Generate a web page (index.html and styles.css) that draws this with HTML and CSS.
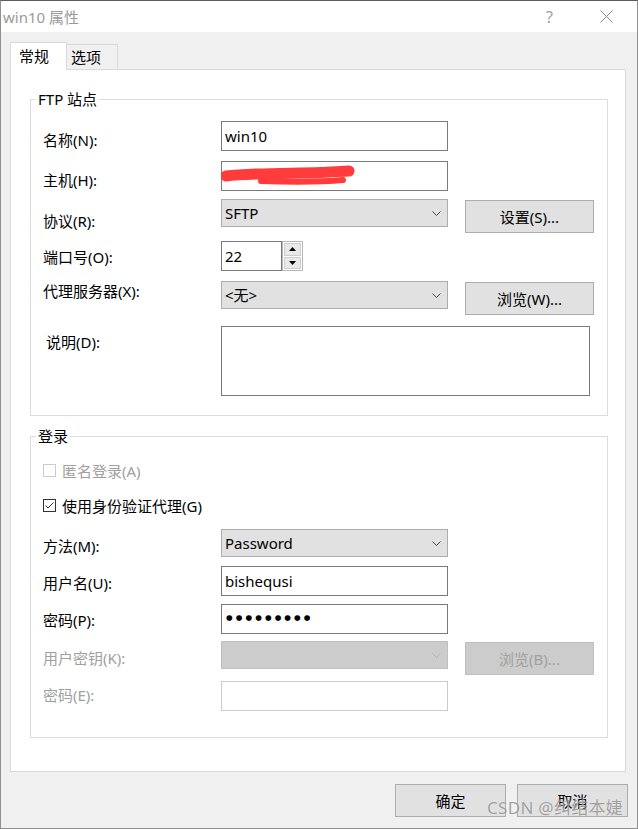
FILE: index.html
```html
<!DOCTYPE html>
<html lang="zh-CN">
<head>
<meta charset="utf-8">
<title>win10 属性</title>
<link rel="stylesheet" href="styles.css">
</head>
<body>
<div class="window">
  <div class="titlebar">
    <span class="title">win10 属性</span>
    <span class="tb-help">?</span>
    <span class="tb-close"><svg width="13" height="13" viewBox="0 0 13 13"><path d="M0.5 0.5L12.5 12.5M12.5 0.5L0.5 12.5" stroke="#8a8a8a" stroke-width="1" fill="none"/></svg></span>
  </div>
  <div class="content">
    <div class="tabs">
      <div class="tab active">常规</div>
      <div class="tab">选项</div>
    </div>
    <div class="panel">
      <div class="group g1">
        <span class="legend">FTP 站点</span>
        <div class="row h32"><span class="lbl p9">名称(N):</span><div class="field">win10</div></div>
        <div class="row h30"><span class="lbl p9">主机(H):</span>
          <div class="field host">
            <svg class="scribble" width="227" height="30" viewBox="0 0 227 30"><path d="M5 15 C 30 12, 70 12.5, 100 11.5 C 112 11, 122 10, 128 10" stroke="#ff3b3b" stroke-width="11" stroke-linecap="round" fill="none"/><path d="M40 20 C 70 21, 100 21, 122 19" stroke="#ff3b3b" stroke-width="6" stroke-linecap="round" fill="none"/></svg>
          </div>
        </div>
        <div class="row h34"><span class="lbl p12">协议(R):</span>
          <div class="select">SFTP<svg class="chev" width="9" height="5" viewBox="0 0 9 5"><path d="M0.5 0.5L4.5 4.5L8.5 0.5" stroke="#444" fill="none"/></svg></div>
          <div class="btn side">设置(S)...</div>
        </div>
        <div class="row h32"><span class="lbl p6">端口号(O):</span>
          <div class="field port">22</div>
          <div class="spinner">
            <div class="spin-btn"><svg width="7" height="4" viewBox="0 0 7 4"><path d="M0 4L3.5 0L7 4Z" fill="#000"/></svg></div>
            <div class="spin-btn"><svg width="7" height="4" viewBox="0 0 7 4"><path d="M0 0L3.5 4L7 0Z" fill="#000"/></svg></div>
          </div>
        </div>
        <div class="row h37"><span class="lbl p0">代理服务器(X):</span>
          <div class="select">&lt;无&gt;<svg class="chev" width="9" height="5" viewBox="0 0 9 5"><path d="M0.5 0.5L4.5 4.5L8.5 0.5" stroke="#444" fill="none"/></svg></div>
          <div class="btn side">浏览(W)...</div>
        </div>
        <div class="row h70"><span class="lbl p6 indent">说明(D):</span>
          <div class="field memo"></div>
        </div>
      </div>

      <div class="group g2">
        <span class="legend">登录</span>
        <div class="row h27 check-row disabled">
          <svg class="cbox" width="13" height="13" viewBox="0 0 13 13"><rect x="0.5" y="0.5" width="12" height="12" fill="#fff" stroke="#cccccc"/></svg>
          <span class="cb-label">匿名登录(A)</span>
        </div>
        <div class="row h26 check-row">
          <svg class="cbox" width="13" height="13" viewBox="0 0 13 13"><rect x="0.5" y="0.5" width="12" height="12" fill="#fff" stroke="#333"/><path d="M2.5 6.5L5 9L10.5 3.5" stroke="#333" fill="none"/></svg>
          <span class="cb-label">使用身份验证代理(G)</span>
        </div>
        <div class="row h29"><span class="lbl p7">方法(M):</span>
          <div class="select">Password<svg class="chev" width="9" height="5" viewBox="0 0 9 5"><path d="M0.5 0.5L4.5 4.5L8.5 0.5" stroke="#444" fill="none"/></svg></div>
        </div>
        <div class="row h30"><span class="lbl p7">用户名(U):</span><div class="field">bishequsi</div></div>
        <div class="row h29"><span class="lbl p6">密码(P):</span><div class="field"><span class="dots">●●●●●●●●●</span></div></div>
        <div class="row h32"><span class="lbl p7 dim">用户密钥(K):</span>
          <div class="select off"><span></span><svg class="chev" width="9" height="5" viewBox="0 0 9 5"><path d="M0.5 0.5L4.5 4.5L8.5 0.5" stroke="#b5b5b5" fill="none"/></svg></div>
          <div class="btn side off">浏览(B)...</div>
        </div>
        <div class="row h30"><span class="lbl p4 dim">密码(E):</span><div class="field off"></div></div>
      </div>
    </div>
    <div class="footer">
      <div class="btn dlg">确定</div>
      <div class="btn dlg">取消</div>
    </div>
  </div>
  <span class="watermark">CSDN @纠结本婕</span>
</div>
</body>
</html>
```

FILE: styles.css
```css
* { box-sizing: border-box; }
html, body { margin: 0; padding: 0; }
body {
  width: 638px;
  height: 829px;
  overflow: hidden;
  background: #f0f0f0;
  font-family: "Noto Sans", "Noto Sans CJK SC", sans-serif;
  font-size: 15px;
  color: #000;
}
.window {
  position: relative;
  width: 638px;
  height: 829px;
  border: 1px solid #909090;
  border-top-color: #5c5c5c;
  background: #f0f0f0;
  display: flex;
  flex-direction: column;
}
.titlebar {
  height: 31px;
  flex: none;
  background: #fff;
  display: flex;
  align-items: center;
  padding-left: 2px;
  color: #9a9a9a;
  line-height: 20px;
}
.title { flex: 1; }
.tb-help {
  width: 53px;
  text-align: center;
  font-size: 16px;
  color: #a0a0a0;
}
.tb-close {
  width: 61px;
  height: 31px;
  display: flex;
  align-items: center;
  justify-content: center;
}
.content {
  flex: 1;
  padding: 10px 9px 0 9px;
  display: flex;
  flex-direction: column;
}
.tabs {
  height: 27px;
  flex: none;
  display: flex;
  align-items: flex-end;
}
.tab {
  height: 25px;
  width: 51px;
  border: 1px solid #d9d9d9;
  border-bottom: none;
  border-left: none;
  padding: 2px 0 0 4px;
  line-height: 20px;
  background: #f0f0f0;
}
.tab.active {
  position: relative;
  z-index: 1;
  width: 57px;
  height: 28px;
  margin-bottom: -1px;
  border-left: 1px solid #d9d9d9;
  padding: 3px 0 0 8px;
  background: #fff;
}
.panel {
  height: 703px;
  flex: none;
  margin-right: 2px;
  background: #fff;
  border: 1px solid #d9d9d9;
  padding: 29px 17px 0 19px;
  display: flex;
  flex-direction: column;
  gap: 20px;
}
.group {
  position: relative;
  border: 1px solid #dcdcdc;
  display: flex;
  flex-direction: column;
  gap: 8px;
  padding: 21px 0 19px 12px;
}
.group.g2 { padding: 23px 0 26px 12px; }
.legend {
  position: absolute;
  top: -11px;
  left: 5px;
  padding: 0 2px;
  background: #fff;
  line-height: 20px;
}
.row {
  display: flex;
  align-items: flex-start;
  flex: none;
}
.h26 { height: 26px; }
.h27 { height: 27px; }
.h29 { height: 29px; }
.h30 { height: 30px; }
.h32 { height: 32px; }
.h34 { height: 34px; }
.h37 { height: 37px; }
.h70 { height: 70px; }
.lbl {
  width: 178px;
  flex: none;
  line-height: 20px;
  white-space: nowrap;
}
.p0 { padding-top: 0; }
.p4 { padding-top: 4px; }
.p6 { padding-top: 6px; }
.p7 { padding-top: 7px; }
.p9 { padding-top: 9px; }
.p12 { padding-top: 12px; }
.indent { padding-left: 3px; }
.dim { color: #a0a0a0; }
.field {
  position: relative;
  width: 227px;
  height: 30px;
  flex: none;
  border: 1px solid #7a7a7a;
  background: #fff;
  padding: 0 3px;
  display: flex;
  align-items: center;
  line-height: 20px;
  white-space: nowrap;
}
.field.port { width: 61px; }
.field.memo { width: 369px; height: 70px; }
.field.off { border-color: #cccccc; }
.scribble {
  position: absolute;
  left: -1px;
  top: -1px;
}
.dots {
  font-family: "DejaVu Sans", sans-serif;
  font-size: 7.6px;
  line-height: 10px;
  letter-spacing: 3.1px;
  padding-left: 1px;
  margin-top: -3px;
}
.select {
  width: 227px;
  height: 28px;
  flex: none;
  background: #e1e1e1;
  border: 1px solid #adadad;
  padding: 0 6px 0 3px;
  display: flex;
  align-items: center;
  justify-content: space-between;
  line-height: 20px;
}
.select.off { background: #cccccc; border-color: #bfbfbf; }
.chev { flex: none; }
.spinner {
  width: 21px;
  height: 30px;
  flex: none;
  border: 1px solid #b8b8b8;
  background: #fff;
  padding: 1px;
  display: flex;
  flex-direction: column;
  gap: 1px;
}
.spin-btn {
  flex: 1;
  background: #e9e9e9;
  border: 1px solid #cfcfcf;
  display: flex;
  align-items: center;
  justify-content: center;
}
.btn {
  background: #e1e1e1;
  border: 1px solid #adadad;
  display: flex;
  align-items: center;
  justify-content: center;
  line-height: 20px;
  flex: none;
}
.btn.side {
  width: 129px;
  height: 33px;
  margin-left: 17px;
  margin-top: 1px;
}
.btn.off {
  background: #cccccc;
  border-color: #bfbfbf;
  color: #a0a0a0;
}
.check-row { align-items: flex-start; }
.cbox { flex: none; margin-top: 4px; margin-right: 6px; }
.cb-label { line-height: 20px; padding-top: 1px; }
.check-row.disabled .cb-label { color: #a0a0a0; }
.footer {
  display: flex;
  justify-content: flex-end;
  gap: 11px;
  margin-top: 12px;
}
.btn.dlg { width: 111px; height: 33px; }
.watermark {
  position: absolute;
  left: 486px;
  top: 797px;
  font-size: 17px;
  line-height: 20px;
  letter-spacing: 0.3px;
  color: rgba(130, 130, 130, 0.75);
  white-space: nowrap;
  text-shadow: 0 0 1px rgba(255, 255, 255, 0.8);
}
```
